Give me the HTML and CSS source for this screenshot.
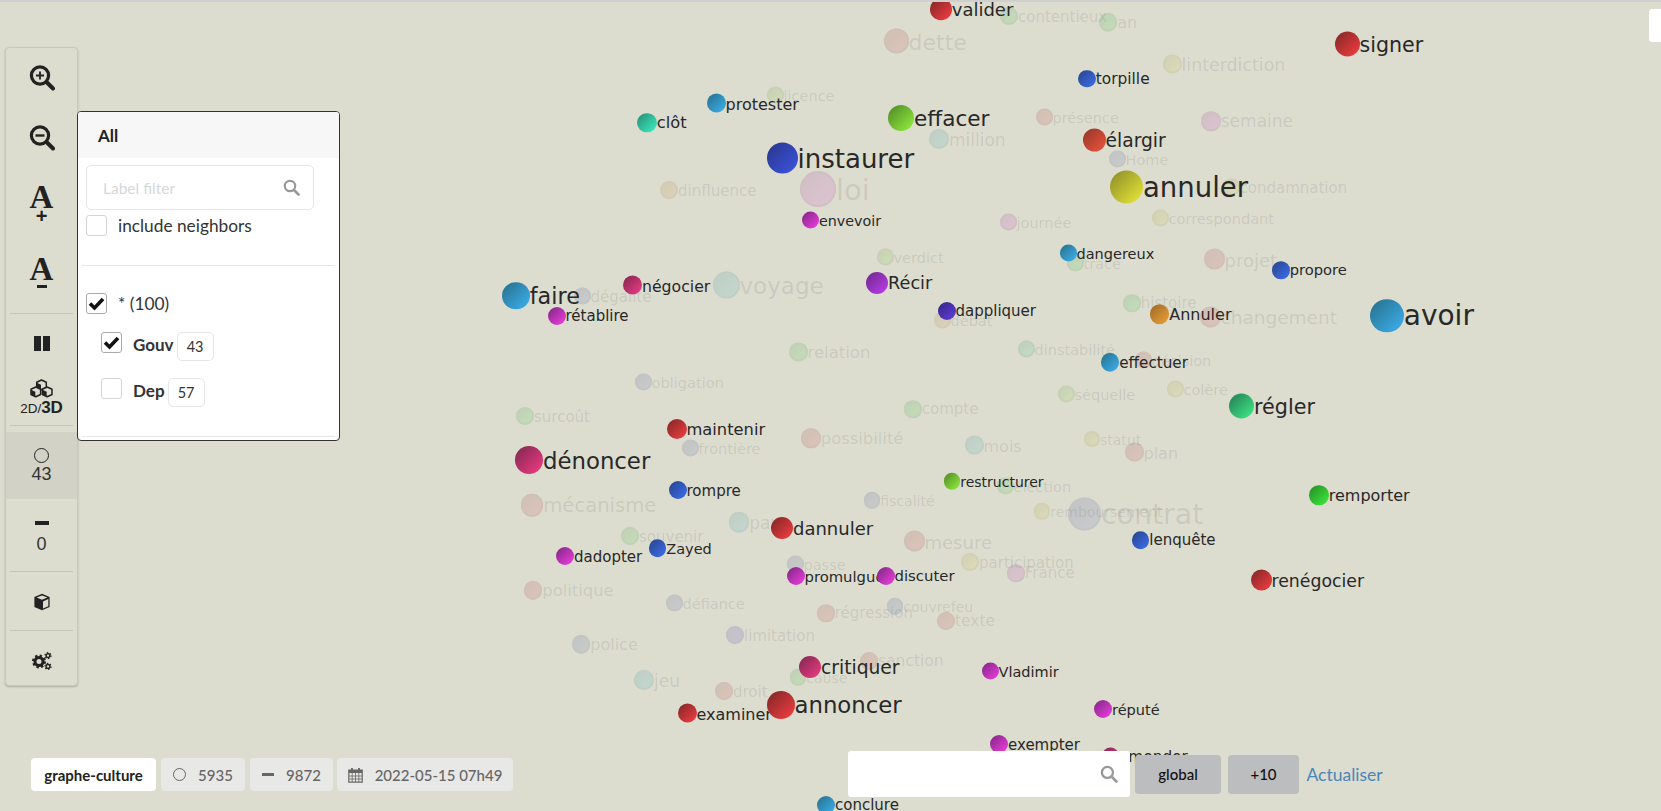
FILE: index.html
```html
<!DOCTYPE html>
<html lang="fr">
<head>
<meta charset="utf-8">
<title>graphe-culture</title>
<link rel="stylesheet" href="styles.css">
</head>
<body>
<main class="stage">
  <div class="graph faded">
    <div class="n green" style="left:1009px;top:16px;--d:18px;--f:15px"><i></i>contentieux</div>
    <div class="n red" style="left:896px;top:41px;--d:25px;--f:22px"><i></i>dette</div>
    <div class="n lime" style="left:775px;top:95px;--d:17px;--f:14.5px"><i></i>licence</div>
    <div class="n red" style="left:1044px;top:117px;--d:17px;--f:14.5px"><i></i>présence</div>
    <div class="n aqua" style="left:939px;top:139px;--d:20px;--f:17px"><i></i>million</div>
    <div class="n mag" style="left:818px;top:189px;--d:36px;--f:29px"><i></i>loi</div>
    <div class="n orange" style="left:669px;top:190px;--d:18px;--f:15px"><i></i>dinfluence</div>
    <div class="n mag" style="left:1008px;top:222px;--d:17px;--f:14.5px"><i></i>journée</div>
    <div class="n lime" style="left:885px;top:257px;--d:17px;--f:14.5px"><i></i>verdict</div>
    <div class="n slate" style="left:582px;top:296px;--d:17px;--f:15px"><i></i>dégalite</div>
    <div class="n aqua" style="left:726px;top:285px;--d:27px;--f:23px"><i></i>voyage</div>
    <div class="n orange" style="left:942px;top:320px;--d:17px;--f:14.5px"><i></i>débat</div>
    <div class="n green" style="left:798px;top:352px;--d:19px;--f:16.5px"><i></i>relation</div>
    <div class="n emerald" style="left:1026px;top:349px;--d:17px;--f:14.5px"><i></i>dinstabilité</div>
    <div class="n slate" style="left:643px;top:382px;--d:17px;--f:14.6px"><i></i>obligation</div>
    <div class="n green" style="left:525px;top:416px;--d:18px;--f:15px"><i></i>surcoût</div>
    <div class="n green" style="left:913px;top:409px;--d:17.5px;--f:15px"><i></i>compte</div>
    <div class="n red" style="left:811px;top:438px;--d:19.5px;--f:16.4px"><i></i>possibilité</div>
    <div class="n aqua" style="left:974px;top:445px;--d:19px;--f:16px"><i></i>mois</div>
    <div class="n slate" style="left:690px;top:448px;--d:17px;--f:14.5px"><i></i>frontière</div>
    <div class="n green" style="left:1005px;top:486px;--d:17px;--f:14.5px"><i></i>élection</div>
    <div class="n slate" style="left:872px;top:500px;--d:16.5px;--f:14px"><i></i>fiscalité</div>
    <div class="n red" style="left:532px;top:505px;--d:22.5px;--f:19.6px"><i></i>mécanisme</div>
    <div class="n yellow" style="left:1042px;top:511px;--d:16.5px;--f:14px"><i></i>remboursement</div>
    <div class="n slate" style="left:1084.5px;top:514px;--d:33px;--f:28.4px"><i></i>contrat</div>
    <div class="n aqua" style="left:739px;top:522px;--d:20.5px;--f:17px"><i></i>pays</div>
    <div class="n red" style="left:914px;top:541px;--d:21px;--f:18px"><i></i>mesure</div>
    <div class="n green" style="left:630px;top:536px;--d:18px;--f:15px"><i></i>souvenir</div>
    <div class="n slate" style="left:795px;top:564px;--d:17px;--f:14.5px"><i></i>passe</div>
    <div class="n yellow" style="left:970px;top:562px;--d:18px;--f:15px"><i></i>participation</div>
    <div class="n mag" style="left:1016px;top:573px;--d:17.5px;--f:15px"><i></i>France</div>
    <div class="n red" style="left:533px;top:590px;--d:18.5px;--f:16.4px"><i></i>politique</div>
    <div class="n slate" style="left:674px;top:603px;--d:17px;--f:14.5px"><i></i>défiance</div>
    <div class="n slate" style="left:895px;top:606px;--d:16.5px;--f:14px"><i></i>couvrefeu</div>
    <div class="n red" style="left:826px;top:613px;--d:17.5px;--f:15px"><i></i>régression</div>
    <div class="n red" style="left:946px;top:621px;--d:18px;--f:15.5px"><i></i>texte</div>
    <div class="n violet" style="left:735px;top:635px;--d:18px;--f:15px"><i></i>limitation</div>
    <div class="n slate" style="left:581px;top:644px;--d:18.5px;--f:16px"><i></i>police</div>
    <div class="n red" style="left:869px;top:661px;--d:18px;--f:15.5px"><i></i>sanction</div>
    <div class="n green" style="left:798px;top:677px;--d:16.5px;--f:14px"><i></i>cause</div>
    <div class="n aqua" style="left:644px;top:680px;--d:20px;--f:17px"><i></i>jeu</div>
    <div class="n red" style="left:724px;top:691px;--d:18px;--f:15px"><i></i>droit</div>
    <div class="n green" style="left:1108px;top:22px;--d:18.5px;--f:16px"><i></i>an</div>
    <div class="n yellow" style="left:1172px;top:64px;--d:19px;--f:17.4px"><i></i>linterdiction</div>
    <div class="n mag" style="left:1211px;top:121px;--d:19.5px;--f:17px"><i></i>semaine</div>
    <div class="n slate" style="left:1117px;top:159px;--d:17px;--f:14.5px"><i></i>Home</div>
    <div class="n yellow" style="left:1231px;top:187px;--d:17px;--f:15px"><i></i>condamnation</div>
    <div class="n yellow" style="left:1160px;top:218px;--d:17px;--f:14.6px"><i></i>correspondant</div>
    <div class="n green" style="left:1075px;top:263px;--d:17px;--f:14.5px"><i></i>trace</div>
    <div class="n red" style="left:1214px;top:259px;--d:21px;--f:18px"><i></i>projet</div>
    <div class="n green" style="left:1132px;top:303px;--d:17.5px;--f:15px"><i></i>histoire</div>
    <div class="n red" style="left:1210px;top:317px;--d:21px;--f:18.5px"><i></i>changement</div>
    <div class="n red" style="left:1143px;top:360px;--d:17px;--f:14.5px"><i></i>décision</div>
    <div class="n lime" style="left:1066px;top:394px;--d:17px;--f:14.5px"><i></i>séquelle</div>
    <div class="n yellow" style="left:1175px;top:389px;--d:17px;--f:14.5px"><i></i>colère</div>
    <div class="n yellow" style="left:1092px;top:439px;--d:16px;--f:14px"><i></i>statut</div>
    <div class="n red" style="left:1134px;top:452px;--d:19px;--f:16px"><i></i>plan</div>
  </div>
  <div class="graph">
    <div class="n red" style="left:941px;top:9px;--d:21.5px;--f:18px"><i></i>valider</div>
    <div class="n sky" style="left:716px;top:103px;--d:19px;--f:16px"><i></i>protester</div>
    <div class="n teal" style="left:647px;top:122.5px;--d:19.5px;--f:16.3px"><i></i>clôt</div>
    <div class="n lime" style="left:901px;top:117.5px;--d:26px;--f:21.6px"><i></i>effacer</div>
    <div class="n indigo" style="left:782px;top:157.5px;--d:31px;--f:26px"><i></i>instaurer</div>
    <div class="n mag" style="left:810.5px;top:220px;--d:17px;--f:14.3px"><i></i>envevoir</div>
    <div class="n sky" style="left:1068px;top:253px;--d:17px;--f:14.5px"><i></i>dangereux</div>
    <div class="n sky" style="left:516px;top:295.5px;--d:27.5px;--f:22.3px"><i></i>faire</div>
    <div class="n crim" style="left:632.5px;top:285px;--d:19px;--f:15.7px"><i></i>négocier</div>
    <div class="n purple" style="left:877px;top:282.5px;--d:22px;--f:17.7px"><i></i>Récir</div>
    <div class="n mag" style="left:556.5px;top:315.5px;--d:18px;--f:15px"><i></i>rétablire</div>
    <div class="n violet" style="left:946.5px;top:310.5px;--d:18px;--f:15px"><i></i>dappliquer</div>
    <div class="n red" style="left:676.5px;top:429px;--d:20px;--f:16.3px"><i></i>maintenir</div>
    <div class="n crim" style="left:529px;top:460px;--d:28px;--f:22.8px"><i></i>dénoncer</div>
    <div class="n blue" style="left:677.5px;top:490px;--d:18px;--f:15px"><i></i>rompre</div>
    <div class="n lime" style="left:952px;top:481px;--d:16.5px;--f:14px"><i></i>restructurer</div>
    <div class="n red" style="left:782px;top:527.5px;--d:22px;--f:18px"><i></i>dannuler</div>
    <div class="n blue" style="left:657.5px;top:548px;--d:17.5px;--f:14.5px"><i></i>Zayed</div>
    <div class="n mag" style="left:565px;top:556px;--d:18px;--f:15px"><i></i>dadopter</div>
    <div class="n mag" style="left:795.5px;top:576px;--d:18px;--f:14.8px"><i></i>promulguer</div>
    <div class="n mag" style="left:885.5px;top:575.5px;--d:18px;--f:14.9px"><i></i>discuter</div>
    <div class="n crim" style="left:810px;top:667px;--d:22px;--f:18.7px"><i></i>critiquer</div>
    <div class="n mag" style="left:990px;top:671px;--d:17px;--f:14.5px"><i></i>Vladimir</div>
    <div class="n red" style="left:687px;top:713px;--d:19px;--f:16px"><i></i>examiner</div>
    <div class="n red" style="left:780.5px;top:704.5px;--d:28px;--f:22.8px"><i></i>annoncer</div>
    <div class="n mag" style="left:1103px;top:709px;--d:18px;--f:14.5px"><i></i>réputé</div>
    <div class="n mag" style="left:999px;top:744px;--d:18px;--f:15px"><i></i>exempter</div>
    <div class="n crim" style="left:1110.5px;top:756px;--d:17px;--f:15.3px"><i></i>amender</div>
    <div class="n sky" style="left:826px;top:804.5px;--d:18px;--f:15px"><i></i>conclure</div>
    <div class="n red" style="left:1347px;top:44px;--d:25px;--f:20.6px"><i></i>signer</div>
    <div class="n blue" style="left:1087px;top:78.5px;--d:17.5px;--f:15.4px"><i></i>torpille</div>
    <div class="n rust" style="left:1094px;top:140px;--d:23px;--f:18.7px"><i></i>élargir</div>
    <div class="n yellow" style="left:1126.5px;top:186.5px;--d:33px;--f:27.5px"><i></i>annuler</div>
    <div class="n blue" style="left:1281px;top:270px;--d:17.5px;--f:14.7px"><i></i>propore</div>
    <div class="n orange" style="left:1159.5px;top:314px;--d:19.5px;--f:16px"><i></i>Annuler</div>
    <div class="n sky" style="left:1387px;top:315.5px;--d:33.5px;--f:28px"><i></i>avoir</div>
    <div class="n sky" style="left:1110px;top:362px;--d:18.5px;--f:15.2px"><i></i>effectuer</div>
    <div class="n emerald" style="left:1241.5px;top:406px;--d:25px;--f:20.7px"><i></i>régler</div>
    <div class="n green" style="left:1319px;top:495px;--d:19.5px;--f:16px"><i></i>remporter</div>
    <div class="n blue" style="left:1140.5px;top:540px;--d:17.5px;--f:15px"><i></i>lenquête</div>
    <div class="n red" style="left:1261px;top:580px;--d:21px;--f:17.3px"><i></i>renégocier</div>
  </div>

  <div class="corner"></div>

  <nav class="toolbar">
    <div class="tool-group first">
      <button class="tool t60"><svg width="26" height="26" viewBox="0 0 26 26"><circle cx="11" cy="10.5" r="8.6" fill="none" stroke="#222" stroke-width="3.2"/><path d="M17.5 17 24 23.5" stroke="#222" stroke-width="4" stroke-linecap="round"/><path d="M11 6.5v8M7 10.5h8" stroke="#222" stroke-width="1.8"/></svg></button>
      <button class="tool t60"><svg width="26" height="26" viewBox="0 0 26 26"><circle cx="11" cy="10.5" r="8.6" fill="none" stroke="#222" stroke-width="3.2"/><path d="M17.5 17 24 23.5" stroke="#222" stroke-width="4" stroke-linecap="round"/><path d="M6.5 10.5h9" stroke="#222" stroke-width="2.4"/></svg></button>
      <button class="tool t66"><span class="big-a">A</span><span class="sign">+</span></button>
      <button class="tool t72"><span class="big-a">A</span><span class="sign minus"></span></button>
    </div>
    <div class="tool-group">
      <button class="tool t58"><span class="pause"><b></b><b></b></span></button>
      <button class="tool t53">
        <svg width="23" height="19" viewBox="0 0 23 19"><defs><g id="cu"><path d="M0 2.300 4.800 0l4.800 2.300v5.200L4.800 9.800 0 7.500z" fill="#dcdccf" stroke="#222" stroke-width="1.500" stroke-linejoin="round"/><path d="M0 2.800 4.300 4.800v4.600L0 7.500z" fill="#222"/></g></defs><use href="#cu" x="6.700" y="1"/><use href="#cu" x="1" y="8"/><use href="#cu" x="12.400" y="8"/></svg>
        <span class="dim"><small>2D/</small><strong>3D</strong></span>
      </button>
    </div>
    <div class="tool-group counts">
      <button class="tool count active"><span class="ring"></span><span class="num">43</span></button>
      <button class="tool count edge"><span class="dash"></span><span class="num">0</span></button>
    </div>
    <div class="tool-group">
      <button class="tool t59"><svg width="18" height="18" viewBox="0 0 18 18"><path d="M9 .8 16.600 4v10L9 17.200 1.400 14V4z" fill="#222"/><path d="M9 2.400 14.400 4.600 9 6.800 3.600 4.600z" fill="#dcdccf"/><path d="M10 8.400 15.300 6v7.300L10 15.600z" fill="#dcdccf"/></svg></button>
    </div>
    <div class="tool-group last">
      <button class="tool t56"><svg width="20" height="18" viewBox="0 0 20 18"><circle cx="7" cy="9.500" r="4" fill="none" stroke="#222" stroke-width="3"/><circle cx="7" cy="9.500" r="5.800" fill="none" stroke="#222" stroke-width="2.400" stroke-dasharray="2.300 2.250"/><circle cx="16" cy="3.600" r="1.900" fill="none" stroke="#222" stroke-width="1.400"/><circle cx="16" cy="3.600" r="3" fill="none" stroke="#222" stroke-width="1.200" stroke-dasharray="1.500 1.640"/><circle cx="16" cy="14.400" r="1.900" fill="none" stroke="#222" stroke-width="1.400"/><circle cx="16" cy="14.400" r="3" fill="none" stroke="#222" stroke-width="1.200" stroke-dasharray="1.500 1.640"/></svg></button>
    </div>
  </nav>

  <section class="panel">
    <header class="panel-head">All</header>
    <div class="panel-body">
      <label class="filter"><input type="text" placeholder="Label filter"><svg width="17" height="17" viewBox="0 0 17 17"><circle cx="7" cy="7" r="5.200" fill="none" stroke="#999" stroke-width="2.200"/><path d="M11 11l4.500 4.500" stroke="#999" stroke-width="2.600" stroke-linecap="round"/></svg></label>
      <div class="row neighbors"><span class="box"></span><span>include neighbors</span></div>
      <hr class="rule rule-a">
      <div class="row all"><span class="box checked"><svg width="17" height="15" viewBox="0 0 17 15"><path d="M2 7.500 6.500 12 15 3" fill="none" stroke="#111" stroke-width="3.600"/></svg></span><span>* (100)</span></div>
      <div class="row sub gouv"><span class="box checked"><svg width="17" height="15" viewBox="0 0 17 15"><path d="M2 7.500 6.500 12 15 3" fill="none" stroke="#111" stroke-width="3.600"/></svg></span><strong>Gouv</strong><span class="badge">43</span></div>
      <div class="row sub dep"><span class="box"></span><strong>Dep</strong><span class="badge">57</span></div>
      <hr class="rule rule-b">
    </div>
  </section>

  <footer class="stats">
    <span class="chip name">graphe-culture</span>
    <span class="chip c2"><span class="chip-ring"></span>5935</span>
    <span class="chip c3"><span class="chip-dash"></span>9872</span>
    <span class="chip c4"><svg width="15" height="16" viewBox="0 0 15 16"><path d="M.8 3h13.400v12.200H.8z" fill="none" stroke="#666" stroke-width="1.200"/><path d="M.8 3h13.400v3H.8z" fill="#666"/><path d="M4 1v3M11 1v3" stroke="#666" stroke-width="1.800"/><path d="M4.200 6v9M7.500 6v9M10.800 6v9M1 9h13M1 12h13" stroke="#666" stroke-width=".8"/></svg>2022-05-15 07h49</span>
  </footer>

  <div class="search">
    <label class="search-box"><input type="text"><svg width="18" height="18" viewBox="0 0 17 17"><circle cx="7" cy="7" r="5.200" fill="none" stroke="#999" stroke-width="2.200"/><path d="M11 11l4.500 4.500" stroke="#999" stroke-width="2.600" stroke-linecap="round"/></svg></label>
    <button class="gray b-global">global</button>
    <button class="gray b-ten">+10</button>
    <a class="refresh" href="#">Actualiser</a>
  </div>
</main>
</body>
</html>
```

FILE: styles.css
```css
* { box-sizing: border-box; }
html, body { margin: 0; height: 100%; overflow: hidden; }
body { background: #dcdccf; font-family: "Lato", sans-serif; color: #333; }
.stage { position: relative; height: 811px; border-top: 2px solid #cfcfcf; overflow: hidden; }

/* free canvas graph */
.graph { position: absolute; inset: -2px 0 0 0; font-family: "DejaVu Sans", sans-serif; color: #282828; }
.n {
  position: absolute; display: flex; align-items: center; white-space: nowrap;
  font-size: var(--f); line-height: 1;
  margin-left: calc(var(--d) / -2);
  transform: translateY(calc(-50% + 1px));
  --a: #888; --b: #aaa;
}
.n i {
  display: block; flex: none; width: var(--d); height: var(--d); margin-bottom: 2px; border-radius: 50%;
  background: linear-gradient(135deg, var(--a) 15%, var(--b) 85%);
}
.faded .n { color: rgba(34,34,34,.11); }
.faded .n i { box-shadow: inset 0 0 0 2px var(--a); opacity: .15; }
.red { --a: #8f2a2a; --b: #e63a3e; }
.rust { --a: #a03a2c; --b: #e2503a; }
.blue { --a: #2a4a98; --b: #3a68e2; }
.indigo { --a: #2b3a96; --b: #3a50d6; }
.sky { --a: #2a7898; --b: #3aa8e2; }
.aqua { --a: #2a8a98; --b: #3ab8c8; }
.mag { --a: #8e2a90; --b: #e23ad4; }
.crim { --a: #8f2a58; --b: #e2387c; }
.purple { --a: #7a2a98; --b: #b23ae2; }
.violet { --a: #3a2a90; --b: #5c3ad2; }
.lime { --a: #5a962a; --b: #88e23a; }
.yellow { --a: #98982a; --b: #dcdc38; }
.orange { --a: #a8702a; --b: #e29a38; }
.green { --a: #2a982a; --b: #3ae03a; }
.emerald { --a: #2a8a5a; --b: #3ade82; }
.teal { --a: #2a9a80; --b: #3ae2b8; }
.slate { --a: #3a4a88; --b: #5a6ab8; }

.corner {
  position: absolute; top: 7px; right: 0; width: 12px; height: 33px;
  background: #fff; border-radius: 3px 0 0 3px;
}

/* left toolbar */
.toolbar {
  position: absolute; left: 5px; top: 45px; width: 73px; height: 639px;
  display: flex; flex-direction: column;
  background: #dcdccf; border: 1px solid #c8c8bc; border-radius: 4px;
  box-shadow: 0 1px 2px rgba(0,0,0,.22);
}
.tool-group { display: flex; flex-direction: column; margin: 0 4px; border-bottom: 1px solid #c4c4b8; }
.tool-group.last { border-bottom: 0; }
.tool-group.first { padding-bottom: 7px; }
.tool-group.counts { margin: 0; padding-top: 6px; border-bottom: 0; }
.tool {
  border: 0; background: none; padding: 0; margin: 0; color: #222;
  display: flex; flex-direction: column; align-items: center; justify-content: center;
  width: 100%; font-family: "Liberation Sans", sans-serif;
}
.t60 { height: 60px; }
.t66 { height: 66px; padding-top: 4px; }
.t72 { height: 72px; padding-top: 4px; }
.t58 { height: 58px; }
.t53 { height: 53px; }
.t59 { height: 58px; padding-top: 2px; }
.t56 { height: 56px; padding-top: 4px; }
.big-a { font-family: "Liberation Serif", serif; font-size: 33px; line-height: 26px; color: #222; font-weight: 700; }
.sign { font-family: "Liberation Sans", sans-serif; font-weight: 700; font-size: 20px; line-height: 13px; color: #222; height: 13px; }
.sign.minus { width: 10px; height: 3px; background: #222; margin-top: 3px; }
.pause { display: flex; gap: 2px; }
.pause b { display: block; width: 7px; height: 15px; background: #222; }
.dim { display: block; line-height: 18px; margin-top: 1px; }
.dim small { font-size: 13.5px; font-weight: 400; }
.dim strong { font-size: 17px; }
.count { height: 67px; font-size: 18px; line-height: 20px; }
.count.active { background: #d2d2c6; }
.count.edge { height: 72px; justify-content: flex-start; padding-top: 22px; }
.ring { display: block; width: 15px; height: 15px; border: 1.5px solid #222; border-radius: 50%; margin-bottom: 1px; }
.dash { display: block; width: 14px; height: 4px; background: #222; margin-bottom: 9px; }
.num { color: #333; }
.counts::after { content: ""; display: block; margin: 0 4px; border-bottom: 1px solid #c4c4b8; }

/* filter panel */
.panel {
  position: absolute; left: 77px; top: 109px; width: 263px; height: 330px;
  background: #fff; border: 1px solid #333; border-radius: 4px; overflow: hidden;
}
.panel-head { height: 46px; background: #f7f7f7; padding: 0 20px; font-weight: 700; font-size: 17px; line-height: 47px; color: #222; }
.panel-body { padding: 7px 4px 0; }
.filter { display: flex; align-items: center; width: 228px; height: 45px; margin-left: 4px; padding: 0 13px 0 16px; border: 1px solid #e6e6e6; border-radius: 5px; background: #fff; }
.filter input { flex: 1; min-width: 0; border: 0; padding: 0; outline: 0; font: 15.500px "Lato", sans-serif; background: none; }
.filter input::placeholder { color: #d8d8d8; opacity: 1; }
.row { display: flex; align-items: center; font-size: 17.300px; color: #333; margin-left: 4px; }
.box { flex: none; display: flex; align-items: center; justify-content: center; width: 21px; height: 21px; margin-right: 11px; border: 1px solid #d4d4d4; border-radius: 3px; background: #fff; }
.box.checked { border-color: #aaa; }
.neighbors { height: 21px; margin-top: 5px; }
.rule { border: 0; border-top: 1px solid #e6e6e6; margin: 0; }
.rule-a { margin-top: 29px; }
.all { height: 21px; margin-top: 27px; }
.sub { margin-left: 19px; font-size: 17px; align-items: flex-start; }
.sub strong { color: #333; line-height: 26px; }
.gouv { margin-top: 18px; height: 29px; }
.dep { margin-top: 17px; height: 28px; }
.badge { flex: none; display: flex; align-items: center; justify-content: center; width: 37px; height: 29px; margin-left: 3px; border: 1px solid #e6e6e6; border-radius: 5px; font-size: 14.500px; color: #333; }
.rule-b { margin-top: 30px; }

/* bottom-left chips */
.stats { position: absolute; left: 31px; top: 756px; display: flex; gap: 5px; height: 33px; font-size: 15px; font-weight: 500; color: #666; }
.chip { display: flex; align-items: center; justify-content: center; gap: 12px; height: 33px; background: #e8e8e6; border-radius: 4px; }
.chip.name { width: 125px; background: #fff; color: #222; font-weight: 700; font-size: 15px; }
.c2 { width: 84px; }
.c3 { width: 83px; }
.c4 { width: 176px; margin-left: -1px; }
.chip-ring { width: 13px; height: 13px; border: 1.200px solid #666; border-radius: 50%; }
.chip-dash { width: 12px; height: 3px; background: #666; }

/* search bar */
.search { position: absolute; left: 848px; top: 749px; display: flex; align-items: center; height: 46px; }
.search-box { display: flex; align-items: center; width: 282px; height: 46px; padding: 0 12px; background: #fff; border-radius: 3px; }
.search-box input { flex: 1; min-width: 0; border: 0; outline: 0; padding: 0; background: none; }
.gray { height: 39px; border: 0; border-radius: 4px; background: #bcbdbe; color: #111; font: 500 15px "Lato", sans-serif; }
.b-global { width: 86px; margin-left: 5px; }
.b-ten { width: 71px; margin-left: 7px; }
.refresh { margin-left: 7.500px; font-size: 17.500px; color: #4a86ba; text-decoration: none; }
```
